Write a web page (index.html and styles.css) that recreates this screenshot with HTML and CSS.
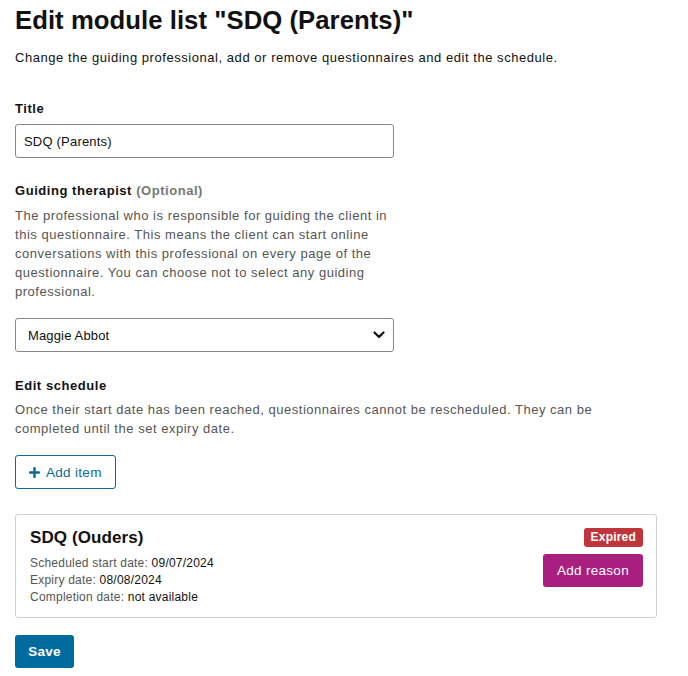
FILE: index.html
```html
<!DOCTYPE html>
<html>
<head>
<meta charset="utf-8">
<link rel="stylesheet" href="styles.css">
</head>
<body>
<main class="page">
  <h1 class="title">Edit module list "SDQ (Parents)"</h1>
  <p class="intro">Change the guiding professional, add or remove questionnaires and edit the schedule.</p>

  <div class="field field-title">
    <label class="label">Title</label>
    <input class="input" type="text" value="SDQ (Parents)">
  </div>

  <div class="field field-therapist">
    <label class="label">Guiding therapist <span class="optional">(Optional)</span></label>
    <p class="help help-narrow">The professional who is responsible for guiding the client in this questionnaire. This means the client can start online conversations with this professional on every page of the questionnaire. You can choose not to select any guiding professional.</p>
    <div class="select">
      <span>Maggie Abbot</span>
      <svg class="chev" width="12" height="8" viewBox="0 0 12 8"><path d="M1.5 1.5 L6 6 L10.5 1.5" fill="none" stroke="#111" stroke-width="2.2" stroke-linecap="round" stroke-linejoin="round"/></svg>
    </div>
  </div>

  <div class="field field-schedule">
    <div class="label">Edit schedule</div>
    <p class="help help-wide">Once their start date has been reached, questionnaires cannot be rescheduled. They can be completed until the set expiry date.</p>
  </div>

  <button class="btn-outline">
    <svg width="11" height="11" viewBox="0 0 11 11"><path d="M5.5 1 V10 M1 5.5 H10" stroke="#0b6a96" stroke-width="2.4" stroke-linecap="round"/></svg>
    Add item
  </button>

  <div class="card">
    <div class="card-main">
      <div class="card-title">SDQ (Ouders)</div>
      <div class="meta">Scheduled start date: <span class="val">09/07/2024</span></div>
      <div class="meta">Expiry date: <span class="val">08/08/2024</span></div>
      <div class="meta">Completion date: <span class="val">not available</span></div>
    </div>
    <div class="card-side">
      <span class="badge">Expired</span>
      <button class="btn-purple">Add reason</button>
    </div>
  </div>

  <button class="btn-save">Save</button>
</main>
</body>
</html>
```
FILE: styles.css
```css
* { box-sizing: border-box; }
body {
  margin: 0;
  background: #fff;
  font-family: "Liberation Sans", Arial, sans-serif;
  color: #111;
}
.page {
  padding: 0 31px 0 15px;
  display: flex;
  flex-direction: column;
  align-items: flex-start;
}
.title {
  font-size: 25.7px;
  font-weight: bold;
  margin: 4px 0 0;
  line-height: 32px;
  letter-spacing: 0.05px;
}
.intro {
  font-size: 13px;
  margin: 13px 0 0;
  line-height: 18px;
  letter-spacing: 0.55px;
}
.field { display: flex; flex-direction: column; align-items: flex-start; }
.field-title { margin-top: 33px; }
.field-therapist { margin-top: 24px; }
.field-schedule { margin-top: 25px; }
.label {
  font-size: 13px;
  font-weight: bold;
  line-height: 18px;
  letter-spacing: 0.55px;
  color: #111;
}
.optional { color: #777; }
.input {
  margin-top: 6px;
  width: 379px;
  height: 34px;
  border: 1px solid #888;
  border-radius: 3px;
  padding: 0 8px;
  font-family: "Liberation Sans", Arial, sans-serif;
  font-size: 13px;
  letter-spacing: 0.2px;
  color: #111;
  outline: none;
}
.help {
  margin: 6px 0 0;
  font-size: 13px;
  line-height: 19px;
  color: #555;
  letter-spacing: 0.52px;
}
.help-narrow { max-width: 392px; }
.help-wide { max-width: 600px; margin-top: 5px; }
.select {
  margin-top: 17px;
  width: 379px;
  height: 34px;
  border: 1px solid #888;
  border-radius: 3px;
  padding: 0 8px 0 12px;
  display: flex;
  align-items: center;
  justify-content: space-between;
  font-size: 13px;
  letter-spacing: 0.15px;
}
.btn-outline {
  margin-top: 17px;
  height: 34px;
  width: 101px;
  border: 1px solid #0b6a96;
  border-radius: 3px;
  background: #fff;
  color: #0b6a96;
  font-family: "Liberation Sans", Arial, sans-serif;
  font-size: 13.5px;
  letter-spacing: 0.3px;
  display: flex;
  align-items: center;
  gap: 6px;
  padding: 0 13px;
}
.card {
  margin-top: 25px;
  align-self: stretch;
  border: 1px solid #d0d0d0;
  border-radius: 3px;
  padding: 13px 13px 11px 14px;
  display: flex;
  justify-content: space-between;
  align-items: flex-start;
}
.card-title {
  font-size: 17px;
  font-weight: bold;
  line-height: 20px;
  letter-spacing: 0.1px;
  margin-bottom: 7px;
}
.meta {
  font-size: 12px;
  line-height: 17px;
  color: #555;
  letter-spacing: 0.22px;
}
.meta .val { color: #111; }
.card-side {
  display: flex;
  flex-direction: column;
  align-items: flex-end;
  gap: 7px;
}
.badge {
  background: #c0353a;
  color: #fff;
  font-size: 12px;
  font-weight: bold;
  line-height: 19px;
  height: 19px;
  padding: 0 7px;
  border-radius: 3px;
  letter-spacing: 0.2px;
}
.btn-purple {
  background: #a91f80;
  color: #fff;
  border: none;
  border-radius: 3px;
  height: 33px;
  padding: 0 14px;
  font-family: "Liberation Sans", Arial, sans-serif;
  font-size: 13.5px;
  letter-spacing: 0.3px;
}
.btn-save {
  margin-top: 17px;
  background: #006b9f;
  color: #fff;
  border: none;
  border-radius: 3px;
  height: 33px;
  width: 59px;
  font-family: "Liberation Sans", Arial, sans-serif;
  font-size: 13.5px;
  font-weight: bold;
  letter-spacing: 0.3px;
}
```
